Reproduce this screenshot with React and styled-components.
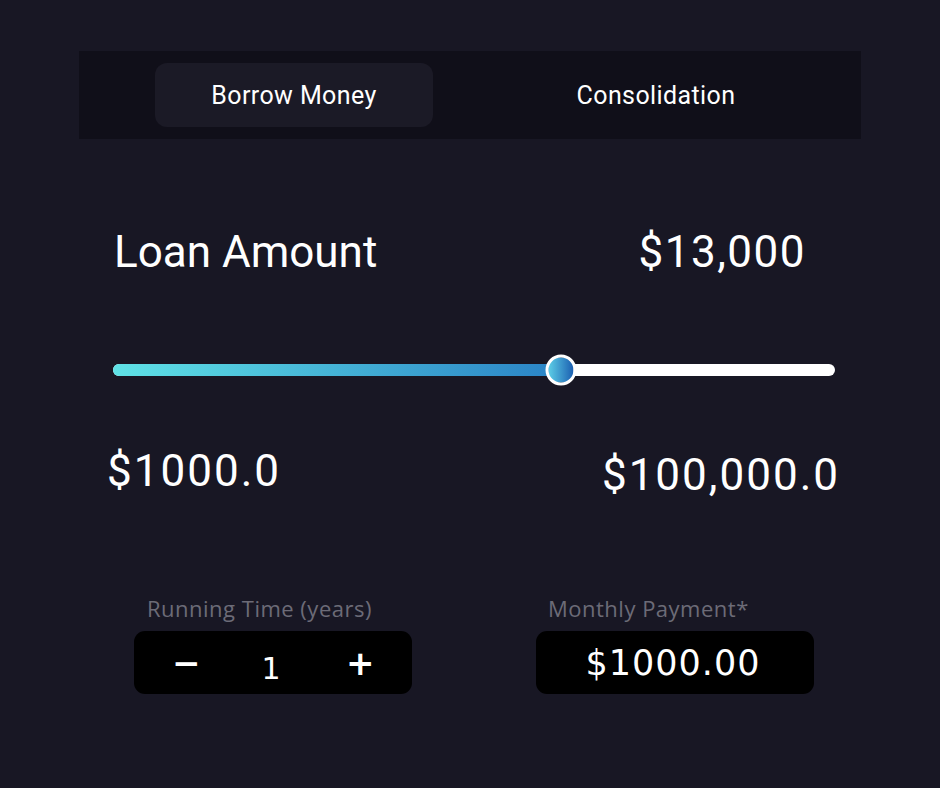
import styled, { createGlobalStyle } from "styled-components";
import { useState } from "react";

const GlobalStyle = createGlobalStyle`
  html, body {
    margin: 0;
    padding: 0;
    background: #181724;
  }
  * {
    box-sizing: border-box;
  }
`;

const Page = styled.div`
  width: 940px;
  height: 788px;
  background: #181724;
  padding-top: 51px;
  font-family: Roboto, "Liberation Sans", sans-serif;
  color: #ffffff;
  overflow: hidden;
`;

const TabBar = styled.div`
  display: flex;
  align-items: center;
  gap: 84px;
  margin: 0 79px;
  height: 88px;
  padding-left: 76px;
  background: #100f19;
`;

const Tab = styled.button`
  width: 278px;
  height: 64px;
  border: none;
  border-radius: 12px;
  background: ${(props) => (props.isActive ? "#1b1a26" : "transparent")};
  color: #ffffff;
  font-family: Roboto, "Liberation Sans", sans-serif;
  font-size: 25px;
  letter-spacing: 0.4px;
  cursor: pointer;
`;

const AmountRow = styled.div`
  display: flex;
  justify-content: space-between;
  align-items: center;
  margin: 88px 134px 0 114px;
  height: 50px;
`;

const BigText = styled.div`
  font-size: 44px;
  font-weight: 400;
  line-height: 50px;
  letter-spacing: ${(props) => props.spacing || 0}px;
`;

const SliderTrack = styled.div`
  position: relative;
  margin: 87px 105px 0 113px;
  height: 12px;
  border-radius: 6px;
  background: #ffffff;
`;

const SliderFill = styled.div`
  height: 100%;
  border-radius: 6px 0 0 6px;
  background: linear-gradient(90deg, #5fe2e6 0%, #2a83c6 100%);
`;

const SliderThumb = styled.div`
  position: absolute;
  top: 50%;
  width: 31px;
  height: 31px;
  border-radius: 50%;
  border: 3px solid #ffffff;
  background: linear-gradient(90deg, #5ccde6 0%, #1b5fb1 100%);
  transform: translate(-50%, -50%);
`;

const RangeRow = styled.div`
  display: flex;
  justify-content: space-between;
  align-items: flex-start;
  margin: 70px 100px 0 107px;
`;

const RangeText = styled.div`
  font-size: 44px;
  line-height: 50px;
  letter-spacing: 2px;
  margin-top: ${(props) => props.offset || 0}px;
`;

const FieldsRow = styled.div`
  display: flex;
  gap: 124px;
  margin: 95px 0 0 134px;
`;

const Field = styled.div`
  display: flex;
  flex-direction: column;
  width: 278px;
`;

const FieldLabel = styled.div`
  font-family: "Open Sans", "Liberation Sans", sans-serif;
  font-size: 22px;
  line-height: 26px;
  letter-spacing: 0.5px;
  color: #6c6b77;
  padding-left: ${(props) => props.indent}px;
  margin-bottom: 10px;
`;

const FieldBox = styled.div`
  display: flex;
  align-items: center;
  justify-content: ${(props) => props.align || "center"};
  height: 63px;
  background: #000000;
  border-radius: 11px;
  padding: 0 42px 0 38px;
`;

const StepButton = styled.button`
  width: 24px;
  height: 40px;
  padding: 0;
  border: none;
  background: transparent;
  color: #ffffff;
  font-family: "DejaVu Sans", sans-serif;
  font-size: 34px;
  font-weight: 700;
  line-height: 40px;
  cursor: pointer;
`;

const StepValue = styled.div`
  font-family: "DejaVu Sans", sans-serif;
  font-size: 30px;
  margin-top: 12px;
`;

const Payment = styled.div`
  font-family: "DejaVu Sans", sans-serif;
  font-size: 35px;
  letter-spacing: 1px;
`;

function App() {
  const [tab, setTab] = useState("borrow");
  const [years, setYears] = useState(1);
  const percent = 62;

  return (
    <Page>
      <GlobalStyle />
      <TabBar>
        <Tab isActive={tab === "borrow"} onClick={() => setTab("borrow")}>
          Borrow Money
        </Tab>
        <Tab isActive={tab === "consolidation"} onClick={() => setTab("consolidation")}>
          Consolidation
        </Tab>
      </TabBar>

      <AmountRow>
        <BigText>Loan Amount</BigText>
        <BigText spacing={1.5}>$13,000</BigText>
      </AmountRow>

      <SliderTrack>
        <SliderFill style={{ width: `${percent}%` }} />
        <SliderThumb style={{ left: `${percent}%` }} />
      </SliderTrack>

      <RangeRow>
        <RangeText>$1000.0</RangeText>
        <RangeText offset={4}>$100,000.0</RangeText>
      </RangeRow>

      <FieldsRow>
        <Field>
          <FieldLabel indent={13}>Running Time (years)</FieldLabel>
          <FieldBox align="space-between">
            <StepButton onClick={() => setYears((y) => Math.max(1, y - 1))}>−</StepButton>
            <StepValue>{years}</StepValue>
            <StepButton onClick={() => setYears((y) => y + 1)}>+</StepButton>
          </FieldBox>
        </Field>
        <Field>
          <FieldLabel indent={12}>Monthly Payment*</FieldLabel>
          <FieldBox>
            <Payment>$1000.00</Payment>
          </FieldBox>
        </Field>
      </FieldsRow>
    </Page>
  );
}

export default App;
